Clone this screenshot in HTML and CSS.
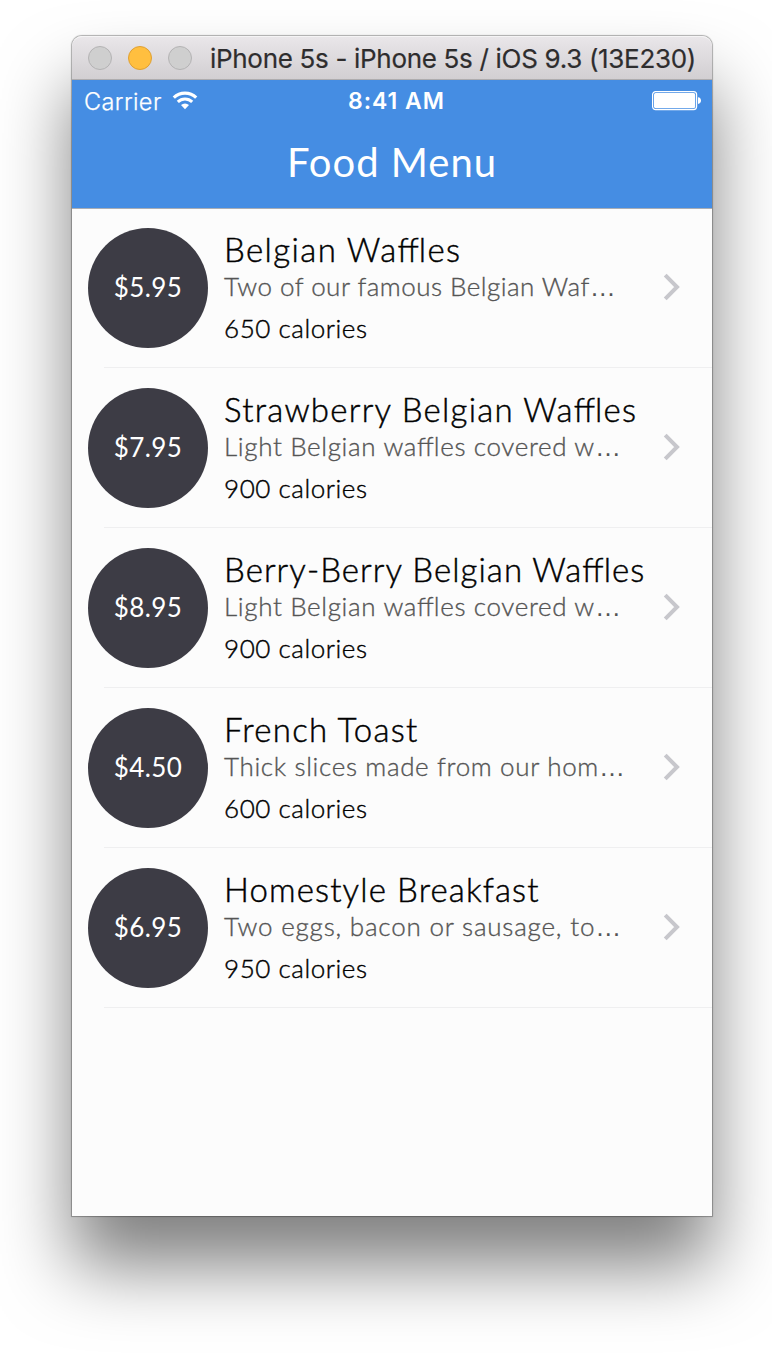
FILE: index.html
```html
<!DOCTYPE html>
<html lang="en">
<head>
<meta charset="utf-8">
<title>Food Menu</title>
<link rel="stylesheet" href="styles.css">
</head>
<body>
<main class="window">
  <div class="titlebar">
    <div class="lights"><i class="light"></i><i class="light amber"></i><i class="light"></i></div>
    <span class="window-title">iPhone 5s - iPhone 5s / iOS 9.3 (13E230)</span>
  </div>
  <header class="header">
    <div class="status">
      <div class="carrier"><span class="carrier-name">Carrier</span>
        <svg class="wifi" width="26" height="19" viewBox="0 0 26 19" fill="none" stroke="#fff"><path d="M1.8 6.6a16 16 0 0 1 22.4 0" stroke-width="3.2"/><path d="M5.8 10.9a10.3 10.3 0 0 1 14.4 0" stroke-width="3"/><path d="M13 18.3l-4-4.2a6 6 0 0 1 8 0z" fill="#fff" stroke="none"/></svg>
      </div>
      <span class="time">8:41 AM</span>
      <svg class="battery" width="50" height="20" viewBox="0 0 50 20"><rect x=".6" y=".6" width="44" height="18" rx="3" fill="none" stroke="#fff" stroke-width="1.2"/><rect x="2" y="2" width="41.2" height="15.2" rx="1.7" fill="#fff"/><path d="M46 6.3c4 .3 4 6.3 0 6.6z" fill="#fff"/></svg>
    </div>
    <h1 class="heading">Food Menu</h1>
  </header>
  <ul class="menu">
    <li class="item"><div class="price">$5.95</div><div class="info"><h2 class="name name-wide">Belgian Wa<span class="tight">ff</span>les</h2><p class="desc desc-narrow">Two of our famous Belgian Waf<span class="dots">…</span></p><p class="calories">650 calories</p></div><svg class="chevron" width="18" height="28" viewBox="0 0 18 28"><path d="M2.2 2.2L14 14 2.2 25.8"/></svg></li>
    <li class="item"><div class="price">$7.95</div><div class="info"><h2 class="name">Strawberry Belgian Wa<span class="tight">ff</span>les</h2><p class="desc">Light Belgian wa<span class="tight">ff</span>les covered w<span class="dots">…</span></p><p class="calories">900 calories</p></div><svg class="chevron" width="18" height="28" viewBox="0 0 18 28"><path d="M2.2 2.2L14 14 2.2 25.8"/></svg></li>
    <li class="item"><div class="price">$8.95</div><div class="info"><h2 class="name name-long">Berry-Berry Belgian Wa<span class="tight">ff</span>les</h2><p class="desc">Light Belgian wa<span class="tight">ff</span>les covered w<span class="dots">…</span></p><p class="calories">900 calories</p></div><svg class="chevron" width="18" height="28" viewBox="0 0 18 28"><path d="M2.2 2.2L14 14 2.2 25.8"/></svg></li>
    <li class="item"><div class="price">$4.50</div><div class="info"><h2 class="name">French Toast</h2><p class="desc">Thick slices made from our hom<span class="dots">…</span></p><p class="calories">600 calories</p></div><svg class="chevron" width="18" height="28" viewBox="0 0 18 28"><path d="M2.2 2.2L14 14 2.2 25.8"/></svg></li>
    <li class="item"><div class="price">$6.95</div><div class="info"><h2 class="name name-short">Homestyle Breakfast</h2><p class="desc desc-wide">Two eggs, bacon or sausage, to<span class="dots">…</span></p><p class="calories">950 calories</p></div><svg class="chevron" width="18" height="28" viewBox="0 0 18 28"><path d="M2.2 2.2L14 14 2.2 25.8"/></svg></li>
  </ul>
</main>
</body>
</html>
```
FILE: styles.css
```css
* { box-sizing: border-box; margin: 0; padding: 0; }
body { background: #fff; height: 1370px; padding: 36px 0 0 72px; overflow: hidden; font-family: Lato, sans-serif; }
.window { width: 640px; height: 1180px; background: #fcfcfc; border-radius: 10px 10px 0 0; box-shadow: 0 0 1px 1px rgba(0,0,0,.3), 0 50px 72px rgba(0,0,0,.5); }
.titlebar { height: 44px; border-radius: 10px 10px 0 0; background: linear-gradient(#e9e6e9, #d2cfd2); border-top: 1px solid #f5f4f5; border-bottom: 1px solid #aeacae; display: flex; align-items: center; padding-left: 16px; }
.lights { display: flex; gap: 16px; width: 122px; }
.light { width: 24px; height: 24px; border-radius: 50%; background: #cfcfcf; border: 1px solid #b4b3b4; }
.light.amber { background: #ffbf3f; border-color: #dfa033; }
.window-title { font: 26px/42px Inter, sans-serif; padding-top: 2px; color: #2e2d2e; letter-spacing: -.31px; white-space: nowrap; -webkit-text-stroke: .2px #2e2d2e; }
.header { height: 129px; background: #458de3; border-bottom: 1px solid #a8adb5; color: #fff; }
.status { height: 41px; display: grid; grid-template-columns: 1fr auto 1fr; align-items: center; padding: 0 10px 0 12px; font: 23.5px/41px Inter, sans-serif; }
.carrier { display: flex; align-items: center; gap: 10px; font-weight: 300; letter-spacing: .4px; }
.carrier-name { -webkit-text-stroke: .25px #fff; }
.wifi { margin-top: -2px; }
.time { font-weight: 600; font-size: 23px; letter-spacing: .95px; padding: 1px 0 0 7px; }
.battery { justify-self: end; }
.heading { font-size: 40px; font-weight: 400; line-height: 82px; text-align: center; letter-spacing: 1px; }
.menu { list-style: none; margin-top: -1px; }
.item { height: 160px; margin-left: 32px; display: flex; align-items: flex-start; box-shadow: inset 0 -1px #efeff0; }
.price { width: 120px; height: 120px; flex: none; margin: 20px 16px 0 -16px; border-radius: 50%; background: #3d3c45; color: #fff; text-align: center; font-size: 26px; line-height: 119px; letter-spacing: .4px; }
.info { width: 430px; padding-top: 19px; white-space: nowrap; }
.name { font-size: 33px; line-height: 44px; font-weight: 300; color: #000; letter-spacing: 1.24px; -webkit-text-stroke: .45px #000; }
.name-wide { letter-spacing: 1.4px; }
.name-long { letter-spacing: 1.05px; }
.name-short { letter-spacing: 1.12px; }
.tight { letter-spacing: 0; }
.desc { font-size: 26px; line-height: 32px; font-weight: 300; color: #555; letter-spacing: .65px; margin-top: -1px; -webkit-text-stroke: .35px #555; }
.desc-narrow { letter-spacing: .48px; }
.desc-wide { letter-spacing: .8px; }
.dots { font-family: "Liberation Sans", sans-serif; line-height: 1; -webkit-text-stroke: 0; }
.calories { font-size: 26px; line-height: 32px; font-weight: 300; color: #000; margin-top: 10px; letter-spacing: .55px; -webkit-text-stroke: .4px #000; }
.chevron { margin: 65px 0 0 9px; flex: none; fill: none; stroke: #c7c7cc; stroke-width: 4; }
```
